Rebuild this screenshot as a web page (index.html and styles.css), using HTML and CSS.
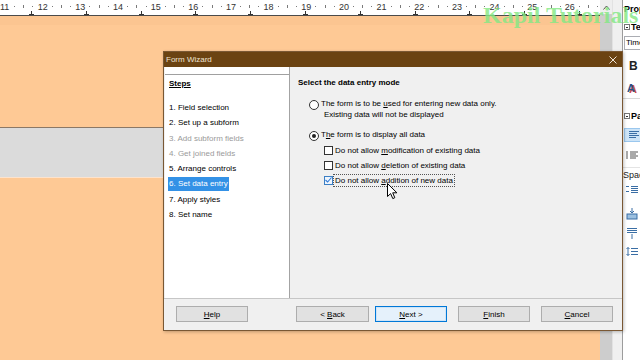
FILE: index.html
```html
<!DOCTYPE html>
<html lang="en">
<head><meta charset="UTF-8">
<meta name="viewport" content="width=device-width,initial-scale=1.0">
<title>Form Wizard</title>
<link rel="stylesheet" href="styles.css">
</head>
<body>

<div class="app">
  <!-- document area: ruler + page -->
  <section class="doc">
    <div class="ruler">
      <div class="ticks">
        <span class="seg"><b>11</b><i></i><i class="half"></i><i></i></span>
        <span class="seg"><b>12</b><i></i><i class="half"></i><i></i></span>
        <span class="seg"><b>13</b><i></i><i class="half"></i><i></i></span>
        <span class="seg"><b>14</b><i></i><i class="half"></i><i></i></span>
        <span class="seg"><b>15</b><i></i><i class="half"></i><i></i></span>
        <span class="seg"><b>16</b><i></i><i class="half"></i><i></i></span>
        <span class="seg"><b>17</b><i></i><i class="half"></i><i></i></span>
        <span class="seg"><b>18</b><i></i><i class="half"></i><i></i></span>
        <span class="seg"><b>19</b><i></i><i class="half"></i><i></i></span>
        <span class="seg"><b>20</b><i></i><i class="half"></i><i></i></span>
        <span class="seg"><b>21</b><i></i><i class="half"></i><i></i></span>
        <span class="seg"><b>22</b><i></i><i class="half"></i><i></i></span>
        <span class="seg"><b>23</b><i></i><i class="half"></i><i></i></span>
        <span class="seg"><b>24</b><i></i><i class="half"></i><i></i></span>
        <span class="seg"><b>25</b><i></i><i class="half"></i><i></i></span>
        <span class="seg"><b>26</b><i></i><i class="half"></i><i></i></span>
      </div>
      <div class="tabs">
        <span></span><span></span><span></span><span></span><span></span><span></span>
        <span></span><span></span><span></span><span></span><span></span>
      </div>
    </div>
    <div class="page">
      <div class="page-top"></div>
      <div class="band"></div>
    </div>
  </section>

  <div class="vscroll">
    <span class="up">
      <svg width="7" height="5" viewBox="0 0 7 5"><path d="M0.5 4.5 L3.5 1 L6.5 4.5" fill="none" stroke="#555" stroke-width="1"/></svg>
    </span>
  </div>
  <div class="gutter"></div>

  <!-- properties sidebar, only its left edge is on screen -->
  <aside class="side">
    <div class="sp-title">Prop</div>
    <div class="sp-sec"><span class="minus"></span>Te</div>
    <div class="sp-input">Time</div>
    <div class="sp-bold">B</div>
    <div class="sp-a"><span>A</span></div>
    <div class="sp-sec sp-para"><span class="minus"></span>Pa</div>
    <div class="sp-sel">
      <svg width="10" height="8" viewBox="0 0 10 8"><path d="M0 0.5H10M0 2.5H8M0 4.5H10M0 6.5H7" stroke="#3a6ea5" stroke-width="1"/></svg>
    </div>
    <div class="sp-ico list">
      <svg width="12" height="8" viewBox="0 0 12 8"><path d="M0 1h2M0 5h2M4 1h8M4 5h8M0 3h2M0 7h2M4 3h6M4 7h6" stroke="#555" stroke-width="1"/></svg>
    </div>
    <div class="sp-label">Spac</div>
    <div class="sp-ico">
      <svg width="12" height="9" viewBox="0 0 12 9"><path d="M0 1.5h3M0 6.5h3M5 1.5h7M5 3.5h7M5 5.5h7M5 7.5h7" stroke="#3a6ea5" stroke-width="1"/></svg>
    </div>
    <div class="sp-ico tall first">
      <svg width="12" height="12" viewBox="0 0 12 12"><path d="M6 0v5M4 3l2 2 2-2" stroke="#3a6ea5" fill="none"/><rect x="1" y="6" width="10" height="5" fill="#9cc0e0" stroke="#3a6ea5"/></svg>
    </div>
    <div class="sp-ico tall">
      <svg width="12" height="12" viewBox="0 0 12 12"><path d="M1 1.5h10M1 3.5h10M1 5.5h10M6 7v5" stroke="#3a6ea5" fill="none"/></svg>
    </div>
    <div class="sp-ico tall">
      <svg width="12" height="9" viewBox="0 0 12 9"><path d="M2 0.5v8M0.5 2l1.5-1.5 1.5 1.5M0.5 7l1.5 1.5 1.5-1.5M5 1.5h7M5 4.5h7M5 7.5h7" stroke="#3a6ea5" fill="none"/></svg>
    </div>
  </aside>
</div>

<!-- the wizard window floats over the document -->
<div class="wizard">
  <header class="wiz-title">
    <span>Form Wizard</span>
    <svg class="close" width="8" height="8" viewBox="0 0 8 8"><path d="M0.5 0.5L7.5 7.5M7.5 0.5L0.5 7.5" stroke="#f1e6d8" stroke-width="1"/></svg>
  </header>

  <div class="wiz-body">
    <nav class="steps">
      <div class="steps-head">Steps</div>
      <ol class="step-list">
        <li>1. Field selection</li>
        <li>2. Set up a subform</li>
        <li class="off">3. Add subform fields</li>
        <li class="off">4. Get joined fields</li>
        <li>5. Arrange controls</li>
        <li class="cur"><span>6. Set data entry</span></li>
        <li>7. Apply styles</li>
        <li>8. Set name</li>
      </ol>
    </nav>

    <main class="pane">
      <h2>Select the data entry mode</h2>

      <div class="opt first">
        <span class="rb"></span>
        <div class="opt-text">
          <div>The form is to be <u>u</u>sed for entering new data only.</div>
          <div class="sub">Existing data will not be displayed</div>
        </div>
      </div>

      <div class="opt second">
        <span class="rb on"></span>
        <div class="opt-text">T<u>h</u>e form is to display all data</div>
      </div>

      <div class="checks">
        <div class="chk"><span class="cb"></span><span>Do not allow <u>m</u>odification of existing data</span></div>
        <div class="chk"><span class="cb"></span><span>Do not allow <u>d</u>eletion of existing data</span></div>
        <div class="chk"><span class="cb on">
          <svg width="7" height="6" viewBox="0 0 7 6"><path d="M0.5 3L2.6 5L6.5 0.5" fill="none" stroke="#2f7bd8" stroke-width="1.1"/></svg>
        </span><span class="focus">Do not allow <u>a</u>ddition of new data</span></div>
      </div>
    </main>
  </div>

  <footer class="wiz-foot">
    <button class="btn"><u>H</u>elp</button>
    <button class="btn back">&lt; <u>B</u>ack</button>
    <button class="btn next"><u>N</u>ext &gt;</button>
    <button class="btn gap"><u>F</u>inish</button>
    <button class="btn gap"><u>C</u>ancel</button>
  </footer>
</div>

<div class="watermark">Kapil Tutorials</div>

<svg class="cursor" width="11" height="17" viewBox="0 0 11 17">
  <path d="M0.5 0.5V13.5L3.6 10.6L5.8 15.6L7.8 14.7L5.7 9.8H9.9Z" fill="#fff" stroke="#000" stroke-width="1" stroke-linejoin="round"/>
</svg>

</body>
</html>
```

FILE: styles.css
```css
*,*::before,*::after{box-sizing:border-box;margin:0;padding:0}
body{
  width:640px;
  height:360px;
  overflow:hidden;
  position:relative;
  font-family:"Liberation Sans",Arial,sans-serif;
  font-size:8px;
  color:#000;
  background:#fec995;
}

/* === WINDOW LAYOUT === */
.app{display:flex;height:360px}
.doc{width:600px;display:flex;flex-direction:column}

/* ruler */
.ruler{
  height:16px;
  background:#fff;
  border-bottom:1px solid #4b4b4b;
  position:relative;
  overflow:hidden;
}
.ticks{display:flex;height:13px;align-items:center}
.seg{
  flex:0 0 37.67px;
  display:grid;
  grid-template-columns:repeat(4,1fr);
  align-items:center;
  justify-items:center;
  color:#333;
}
.seg b{font-weight:normal;font-size:9px}
.seg i{width:1px;height:1px;background:#7a7a7a}
.seg i.half{height:3px}
.tabs{position:absolute;left:29px;bottom:0;display:flex}
.tabs span{flex:0 0 54.8px;height:4px;position:relative}
.tabs span::before{content:"";position:absolute;left:0;bottom:0;width:5px;height:1px;background:#333}
.tabs span::after{content:"";position:absolute;left:2px;bottom:0;width:1px;height:4px;background:#333}

/* page */
.page{flex:1;background:#fec995}
.page-top{height:9px;background:#fbc591}
.band{
  margin-top:102px;
  height:51px;
  background:#dbdbdb;
  border-top:1px solid #8b7866;
  border-bottom:1px solid #fde3cd;
}

.vscroll{width:12px;background:#cdcdcd}
.vscroll .up{display:flex;justify-content:center;align-items:center;height:14px;background:#eeeeee}
.gutter{width:10px;background:#f0f0f0;border-left:1px solid #e2e2e2}

/* === SIDEBAR === */
.side{
  width:18px;
  background:#fff;
  border-left:1px solid #9c9c9c;
  overflow:hidden;
  white-space:nowrap;
}
.sp-title{height:19px;line-height:19px;padding-left:1px;font-weight:bold;font-size:9px}
.sp-sec{height:16px;display:flex;align-items:center;gap:1px;padding-left:1px;font-weight:bold;font-size:9px}
.minus{width:6px;height:6px;border:1px solid #777;position:relative;flex:none}
.minus::after{content:"";position:absolute;left:1px;top:2px;width:2px;height:1px;background:#333}
.sp-input{
  margin:1px 0 0 1px;
  height:14px;
  line-height:12px;
  border:1px solid #abadb3;
  border-right:none;
  padding-left:1px;
  font-size:8px;
}
.sp-bold{height:22px;margin-top:5px;line-height:22px;padding-left:6px;font-weight:bold;font-size:12px;color:#222}
.sp-a{height:22px;display:flex;align-items:center;padding-left:4px;border-bottom:1px solid #d8d8d8}
.sp-a span{font-weight:bold;font-size:11px;color:#2b4f86;text-shadow:2px 1px 0 #d05050}
.sp-para{height:25px;margin-top:4px}
.sp-sel{
  height:14px;
  margin-left:1px;
  background:#cde4f7;
  border:1px solid #9ac7ee;
  border-right:none;
  display:flex;
  align-items:center;
  padding-left:4px;
}
.sp-ico{height:14px;display:flex;align-items:center;padding-left:3px}
.sp-ico.list{height:26px;border-bottom:1px solid #e4e4e4}
.sp-ico.tall{height:19px}
.sp-ico.first{margin-top:8px}
.sp-label{height:14px;line-height:14px;font-size:9px;color:#222}

/* === WIZARD DIALOG === */
.wizard{
  position:absolute;
  left:163px;
  top:51px;
  width:460px;
  height:280px;
  display:flex;
  flex-direction:column;
  background:#f0f0f0;
  border:1px solid #7a5834;
  box-shadow:1px 1px 3px rgba(0,0,0,.25);
}
.wiz-title{
  height:15px;
  flex:none;
  background:#6b4312;
  color:#efe3d3;
  display:flex;
  align-items:center;
  justify-content:space-between;
  padding:0 5px 0 2px;
  font-size:8px;
}
.wiz-body{height:231px;flex:none;display:flex}

.steps{
  width:125px;
  margin-left:1px;
  background:#fff;
  border-right:1px solid #a3a3a3;
  padding:7px 0 0;
}
.steps-head{
  border-top:1px solid #a0a0a0;
  padding:1px 0 0 4px;
  line-height:15px;
  font-weight:bold;
  text-decoration:underline;
}
.step-list{list-style:none;margin-top:9px}
.step-list li{line-height:15.3px;height:15.3px;padding-left:4px}
.step-list li.off{color:#9a9a9a}
.step-list li.cur span{
  display:inline-block;
  line-height:14px;
  margin-left:-1px;
  padding:0 1px;
  background:#3391e6;
  color:#fff;
  vertical-align:middle;
}

.pane{flex:1;padding:8px 0 0 8px}
.pane h2{font-size:8px;font-weight:bold;line-height:16px}
.opt{display:flex;align-items:flex-start;gap:2px;margin-left:11px}
.opt.first{margin-top:8px}
.opt.second{margin-top:10px}
.opt-text{line-height:10.5px}
.opt-text .sub{padding-left:3px}
.rb{
  width:10px;
  height:10px;
  margin-top:0.5px;
  border:1px solid #333;
  border-radius:50%;
  background:#fff;
  flex:none;
  display:flex;
  justify-content:center;
  align-items:center;
}
.rb.on::after{content:"";width:4px;height:4px;border-radius:50%;background:#222}

.checks{margin:2px 0 0 26px}
.chk{display:flex;align-items:center;gap:2px;height:15px}
.cb{
  width:9px;
  height:9px;
  border:1px solid #333;
  background:#fff;
  flex:none;
  display:flex;
  justify-content:center;
  align-items:center;
}
.cb.on{border-color:#3c7fc4;background:#eef5fd}
.focus{outline:1px dotted #555;outline-offset:1px}

/* footer buttons */
.wiz-foot{
  flex:1;
  border-top:1px solid #c6c6c6;
  display:flex;
  align-items:flex-start;
  padding:7px 0 0 12px;
}
.btn{
  width:72px;
  height:16px;
  font-family:inherit;
  font-size:8px;
  color:#000;
  background:#e1e1e1;
  border:1px solid #adadad;
}
.btn.back{margin-left:48px;width:73px}
.btn.next{margin-left:6px;border-color:#0078d7;box-shadow:inset 0 0 0 1px #cfe4f7;background:#e5f1fb}
.btn.gap{margin-left:11px}

/* === OVERLAYS === */
.watermark{
  position:absolute;
  left:483px;
  top:2px;
  font-family:"Liberation Serif","Times New Roman",serif;
  font-weight:bold;
  font-size:24px;
  color:rgba(132,232,132,.82);
  white-space:nowrap;
}
.cursor{position:absolute;left:387px;top:183px}
```
